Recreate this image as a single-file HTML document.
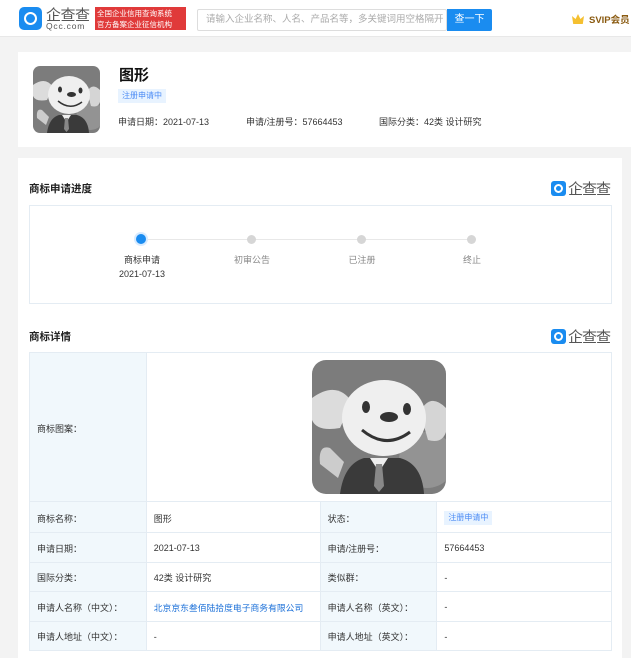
<!DOCTYPE html>
<html><head><meta charset="utf-8"><style>
*{margin:0;padding:0;box-sizing:border-box}
body{width:631px;height:646px;overflow:hidden;background:#f3f3f3;font-family:"Liberation Sans","Noto Sans CJK SC",sans-serif;font-size:9px;color:#333;position:relative}
.abs{position:absolute}
.hdr{left:0;top:0;width:631px;height:37px;background:#fff;border-bottom:1px solid #e8e8e8}
.card{background:#fff}
.tag{background:#e8f3ff;color:#4d8cf5;font-size:8px;padding:0 4px;line-height:14px;display:inline-block}
table{border-collapse:collapse;position:absolute;left:29px;top:352px;width:583px}
td{border:1px solid #e4ecf3;padding:2px 0 0 7px;font-size:9px;height:29.5px}
td.l{background:#f1f8fc;color:#333}
.logo2{display:flex;align-items:center;font-size:15px;color:#555;letter-spacing:-1px}
.logo2 i{width:15px;height:15px;background:#1a8cf0;border-radius:3px;margin-right:2px;display:inline-block;position:relative}
.logo2 i:after{content:"";position:absolute;left:3px;top:3px;width:5px;height:5px;border:2px solid #fff;border-radius:50%}
</style></head><body>
<div class="abs hdr">
 <div class="abs" style="left:19px;top:7px;width:23px;height:23px;background:#1a8cf0;border-radius:5px"><div class="abs" style="left:5px;top:5px;width:13px;height:13px;border:2.5px solid #fff;border-radius:50%"></div></div>
 <div class="abs" style="left:46px;top:4px;font-size:15px;color:#555;letter-spacing:-0.5px">企查查</div>
 <div class="abs" style="left:46px;top:21px;font-size:8.5px;color:#555;letter-spacing:0.8px">Qcc.com</div>
 <div class="abs" style="left:95px;top:7px;width:91px;height:23px;background:#e03a3a;color:#fff;font-size:7.5px;line-height:11px;padding:1px 2px;white-space:nowrap">全国企业信用查询系统<br>官方备案企业征信机构</div>
 <div class="abs" style="left:197px;top:9px;width:250px;height:22px;border:1px solid #ddd;border-radius:2px;color:#aaa;font-size:9.5px;line-height:20px;padding-left:8px;white-space:nowrap;overflow:hidden">请输入企业名称、人名、产品名等，多关键词用空格隔开</div>
 <div class="abs" style="left:447px;top:9px;width:45px;height:22px;background:#1a8cf0;color:#fff;font-size:10px;line-height:22px;text-align:center;border-radius:0 2px 2px 0">查一下</div>
 <div class="abs" style="left:572px;top:14px;width:12px;height:10px;background:#f5c030;clip-path:polygon(0 20%,30% 50%,50% 0,70% 50%,100% 20%,90% 100%,10% 100%)"></div>
 <div class="abs" style="left:589px;top:12px;font-size:9.5px;color:#8a5a10;font-weight:bold;white-space:nowrap">SVIP会员</div>
</div>

<div class="abs card" style="left:18px;top:52px;width:620px;height:95px"></div>
<svg class="abs" style="left:33px;top:66px" width="67" height="67" viewBox="0 0 134 134"><defs><clipPath id="c1"><rect width="134" height="134" rx="14"/></clipPath></defs><g clip-path="url(#c1)"><rect width="134" height="134" fill="#7c7c7c"/><circle cx="115" cy="100" r="28" fill="#939393"/><path d="M0 38 Q25 20 40 42 L28 68 Q5 72 0 60Z" fill="#dcdcdc"/><path d="M134 48 Q118 32 108 52 L116 80 Q130 84 134 72Z" fill="#d5d5d5"/><path d="M28 134 Q32 104 52 98 L88 98 Q110 104 112 134Z" fill="#3a3a3a"/><path d="M58 98 L67 112 L76 98Z" fill="#eee"/><path d="M64 104 L70 104 L72 126 L67 132 L62 126Z" fill="#888"/><path d="M8 104 Q6 84 18 88 L32 102 L26 118Z" fill="#ccc"/><ellipse cx="72" cy="58" rx="42" ry="38" fill="#efefef"/><ellipse cx="54" cy="47" rx="4" ry="6" fill="#333"/><ellipse cx="95" cy="49" rx="4" ry="6" fill="#333"/><ellipse cx="77" cy="57" rx="9" ry="5" fill="#333"/><path d="M50 70 Q74 90 98 72" stroke="#333" stroke-width="3" fill="none"/></g></svg>
<div class="abs" style="left:119px;top:64px;font-size:15px;font-weight:bold;color:#111">图形</div>
<div class="abs tag" style="left:118px;top:89px">注册申请中</div>
<div class="abs" style="left:118px;top:115px;white-space:nowrap">申请日期：2021-07-13</div>
<div class="abs" style="left:246px;top:115px;white-space:nowrap">申请/注册号：57664453</div>
<div class="abs" style="left:379px;top:115px;white-space:nowrap">国际分类：42类 设计研究</div>

<div class="abs card" style="left:18px;top:158px;width:604px;height:500px"></div>
<div class="abs" style="left:29px;top:181px;font-size:10.5px;color:#222;font-weight:bold">商标申请进度</div>
<div class="abs logo2" style="left:551px;top:178px"><i></i>企查查</div>
<div class="abs" style="left:29px;top:205px;width:583px;height:99px;border:1px solid #e4ecf3"></div>
<div class="abs" style="left:141px;top:239px;width:330px;height:1px;background:#e8e8e8"></div>
<div class="abs" style="left:136px;top:234px;width:10px;height:10px;border-radius:50%;background:#1a8cf0;box-shadow:0 0 0 2px #d8ebff"></div>
<div class="abs" style="left:247px;top:235px;width:9px;height:9px;border-radius:50%;background:#d6d6d6"></div>
<div class="abs" style="left:357px;top:235px;width:9px;height:9px;border-radius:50%;background:#d6d6d6"></div>
<div class="abs" style="left:467px;top:235px;width:9px;height:9px;border-radius:50%;background:#d6d6d6"></div>
<div class="abs" style="left:112px;top:253px;width:60px;text-align:center;color:#333;line-height:14px">商标申请<br>2021-07-13</div>
<div class="abs" style="left:222px;top:253px;width:60px;text-align:center;color:#888">初审公告</div>
<div class="abs" style="left:332px;top:253px;width:60px;text-align:center;color:#888">已注册</div>
<div class="abs" style="left:442px;top:253px;width:60px;text-align:center;color:#888">终止</div>

<div class="abs" style="left:29px;top:329px;font-size:10.5px;color:#222;font-weight:bold">商标详情</div>
<div class="abs logo2" style="left:551px;top:326px"><i></i>企查查</div>

<table>
<colgroup><col style="width:117px"><col style="width:174px"><col style="width:117px"><col style="width:175px"></colgroup>
<tr><td class="l" style="height:149px">商标图案：</td><td colspan="3"></td></tr>
<tr><td class="l" style="height:31px">商标名称：</td><td>图形</td><td class="l">状态：</td><td><span class="tag">注册申请中</span></td></tr>
<tr><td class="l">申请日期：</td><td>2021-07-13</td><td class="l">申请/注册号：</td><td>57664453</td></tr>
<tr><td class="l">国际分类：</td><td>42类 设计研究</td><td class="l">类似群：</td><td>-</td></tr>
<tr><td class="l">申请人名称（中文）：</td><td style="color:#1a6fd8;white-space:nowrap;font-size:8.8px">北京京东叁佰陆拾度电子商务有限公司</td><td class="l">申请人名称（英文）：</td><td>-</td></tr>
<tr><td class="l">申请人地址（中文）：</td><td>-</td><td class="l">申请人地址（英文）：</td><td>-</td></tr>
</table>
<svg class="abs" style="left:312px;top:360px" width="134" height="134" viewBox="0 0 134 134"><defs><clipPath id="c2"><rect width="134" height="134" rx="14"/></clipPath></defs><g clip-path="url(#c2)"><rect width="134" height="134" fill="#7c7c7c"/><circle cx="115" cy="100" r="28" fill="#939393"/><path d="M0 38 Q25 20 40 42 L28 68 Q5 72 0 60Z" fill="#dcdcdc"/><path d="M134 48 Q118 32 108 52 L116 80 Q130 84 134 72Z" fill="#d5d5d5"/><path d="M28 134 Q32 104 52 98 L88 98 Q110 104 112 134Z" fill="#3a3a3a"/><path d="M58 98 L67 112 L76 98Z" fill="#eee"/><path d="M64 104 L70 104 L72 126 L67 132 L62 126Z" fill="#888"/><path d="M8 104 Q6 84 18 88 L32 102 L26 118Z" fill="#ccc"/><ellipse cx="72" cy="58" rx="42" ry="38" fill="#efefef"/><ellipse cx="54" cy="47" rx="4" ry="6" fill="#333"/><ellipse cx="95" cy="49" rx="4" ry="6" fill="#333"/><ellipse cx="77" cy="57" rx="9" ry="5" fill="#333"/><path d="M50 70 Q74 90 98 72" stroke="#333" stroke-width="3" fill="none"/></g></svg>
</body></html>
